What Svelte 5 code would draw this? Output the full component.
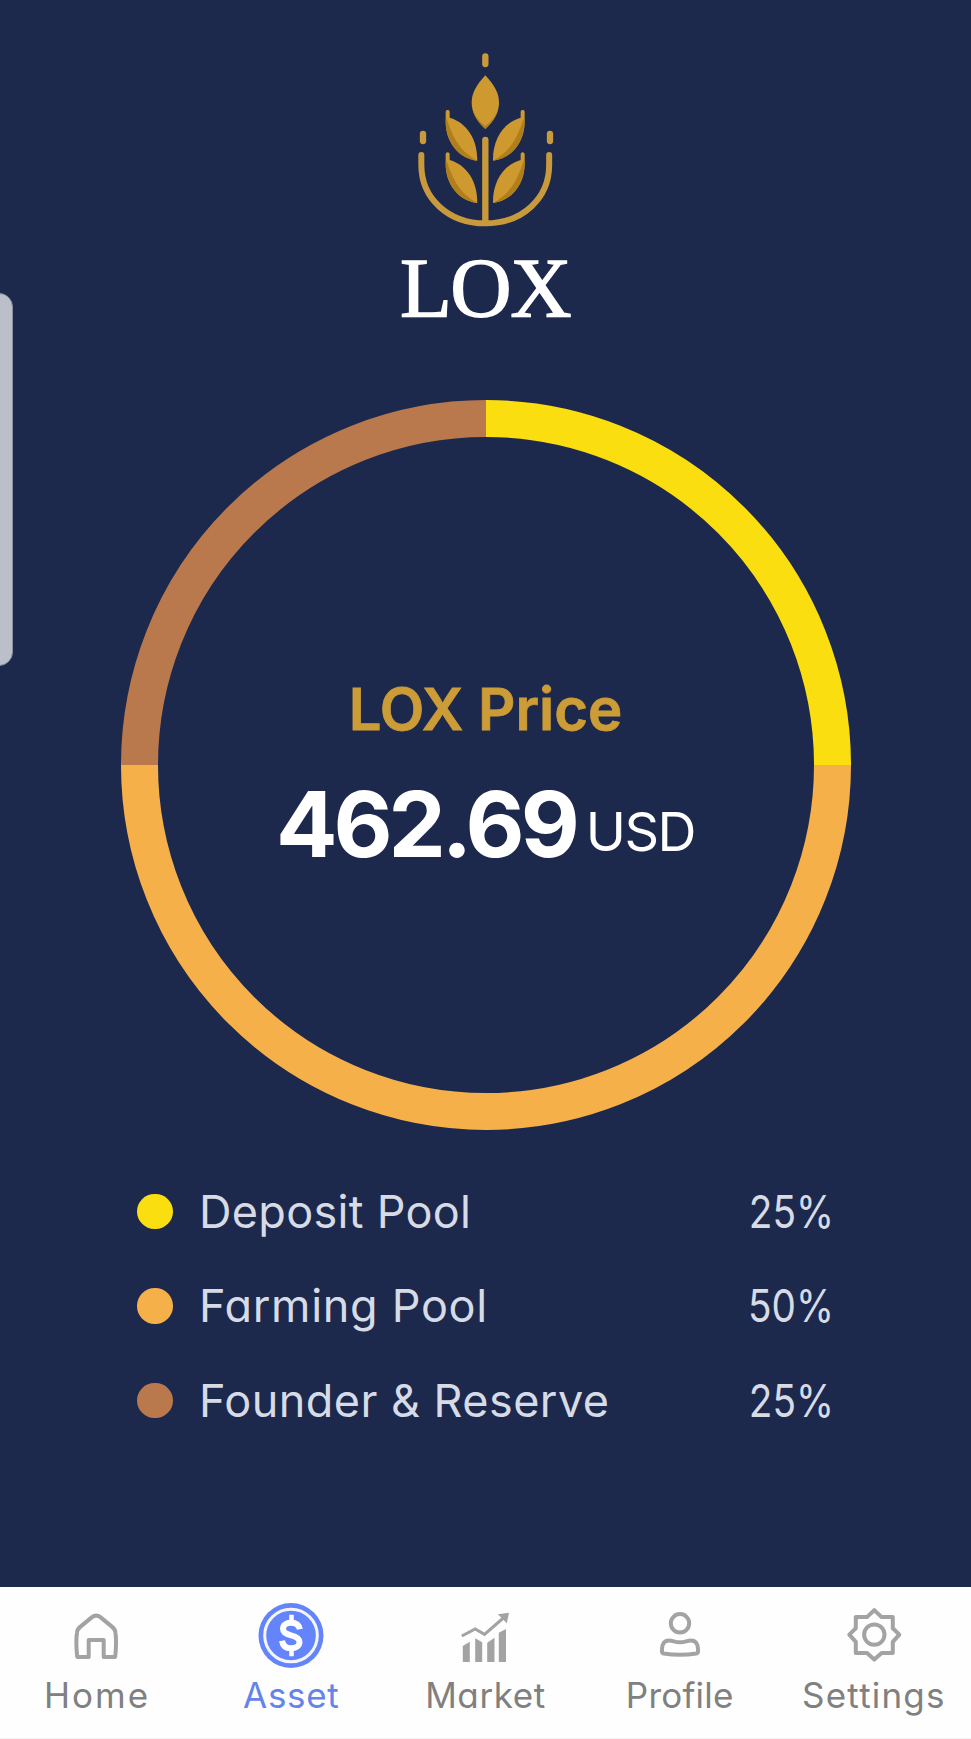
<script lang="ts">
	type Slice = {
		label: string;
		percent: number;
		color: string;
		tracking: number;
	};

	type Tab = {
		id: string;
		label: string;
		tracking: number;
	};

	const SLICES: Slice[] = [
		{ label: 'Deposit Pool', percent: 25, color: '#fbde0f', tracking: 0.3 },
		{ label: 'Farming Pool', percent: 50, color: '#f6b04a', tracking: 0.7 },
		{ label: 'Founder & Reserve', percent: 25, color: '#ba784d', tracking: 0.45 }
	];

	const TABS: Tab[] = [
		{ id: 'home', label: 'Home', tracking: 2 },
		{ id: 'asset', label: 'Asset', tracking: 0.7 },
		{ id: 'market', label: 'Market', tracking: 0.6 },
		{ id: 'profile', label: 'Profile', tracking: 0.2 },
		{ id: 'settings', label: 'Settings', tracking: 1.2 }
	];

	let activeTab = $state('asset');

	// where each slice starts on the ring, in percent
	const arcs = SLICES.map((s, i) => ({
		...s,
		start: SLICES.slice(0, i).reduce((sum, p) => sum + p.percent, 0)
	}));
</script>

<div class="screen">
	<div class="edge-handle"></div>

	<main>
		<div class="logo">
			<svg viewBox="90 30 450 540" width="150" height="180" fill="none">
				<g stroke="#c99a3c" stroke-width="19" stroke-linecap="round">
					<path d="M316 49V72M129 282V303M510 282V303M316 300V548" />
					<path stroke-width="18" d="M124 345V375C124 475 205 550 316 550C427 550 507.500 475 507.500 375V345" />
				</g>
				<path
					fill="#ce9a30"
					d="M316 106C288 137 275 160 275 188C275 217 290 242 316 267C342 242 357 217 357 188C357 160 344 137 316 106Z"
				/>
				<path fill="#b07f1b" d="M278 208C284 233 297 250 316 267C335 250 348 233 354 208C346 230 335 244 316 258C297 244 286 230 278 208Z" />
				{#each [0, 127] as dy (dy)}
					<g transform="translate(0 {dy})">
						{#each ['', 'translate(631 0) scale(-1 1)'] as flip (flip)}
							<g transform={flip}>
								<path
									fill="#ce9a30"
									d="M197 216C197 208 209 208 209 216V233C261 248 293 298 292 362C238 356 195 308 197 240Z"
								/>
								<path fill="#b07f1b" d="M197 236C195 308 238 356 292 362C250 338 225 312 200 236Z" />
							</g>
						{/each}
					</g>
				{/each}
			</svg>
			<h1>LOX</h1>
		</div>

		<div class="chart">
			<svg viewBox="0 0 730 730" width="730" height="730">
				{#each arcs as a (a.label)}
					<circle
						cx="365"
						cy="365"
						r="346.5"
						fill="none"
						stroke={a.color}
						stroke-width="37"
						pathLength="100"
						stroke-dasharray="{a.percent} {100 - a.percent}"
						stroke-dashoffset={-a.start}
						transform="rotate(-90 365 365)"
					/>
				{/each}
			</svg>
			<div class="price">
				<h2>LOX Price</h2>
				<p><strong>462.69</strong><span>USD</span></p>
			</div>
		</div>

		<ul class="legend">
			{#each SLICES as s (s.label)}
				<li>
					<i style:background={s.color}></i>
					<span style:letter-spacing="{s.tracking}px">{s.label}</span>
					<b>{s.percent}%</b>
				</li>
			{/each}
		</ul>
	</main>

	<nav>
		{#each TABS as t (t.id)}
			<button class:active={activeTab === t.id} onclick={() => (activeTab = t.id)}>
				<svg viewBox="0 0 66 66" width="66" height="66" fill="none" stroke="#a3a3a3" stroke-width="4" stroke-linejoin="round">
					{#if t.id === 'home'}
						<path
							transform="translate(-0.8 -1.6)"
							d="M14 56.500H25.500V39.500H40.500V56.500H52Q53.500 42 52.300 32.500Q52 29 49 26.500L37.500 17Q33 13.500 28.500 17L17 26.500Q14 29 13.700 32.500Q12.500 42 14 56.500Z"
						/>
					{:else if t.id === 'asset'}
						<circle cx="33" cy="33.500" r="32.500" fill="#6484fb" stroke="none" />
						<circle cx="33" cy="33.500" r="26.300" stroke="#f3f6ff" stroke-width="3" />
						<g stroke="#fff" transform="translate(0 -0.7)">
							<path
								stroke-width="6"
								d="M41.800 28C41 23.500 38 21.500 33 21.500C28 21.500 25 24 25 27.500C25 31.500 28 32.800 33 34C38.500 35.300 41.500 37 41.500 40.800C41.500 44.700 38 47 33 47C27.500 47 24.700 44.200 24 39.500"
							/>
							<path stroke-width="4.500" d="M33.500 13.500V22M33.500 46V55" />
						</g>
					{:else if t.id === 'market'}
						<path stroke-width="3" stroke-linejoin="miter" d="M9.800 34L23.200 26.900L32.500 32.300L52.500 15" />
						<g fill="#a3a3a3" stroke="none">
							<path d="M45.800 12.300L57 10.700L54.800 21.300Z" />
							<path d="M10.800 44L17.800 39.700V60H10.800Z" />
							<path d="M23.200 36.300L30.200 40.300V60H23.200Z" />
							<path d="M35.200 40.700L42.500 35.700V60H35.200Z" />
							<path d="M46.800 30.700L54 27V60H46.800Z" />
						</g>
					{:else if t.id === 'profile'}
						<circle cx="33" cy="21.300" r="9.200" />
						<path
							d="M22 38.500C26 38.500 28 40.300 33 40.300C38 40.300 40 38.500 44 38.500C49 38.500 51 42.500 51 47V49.500Q51 51 49.500 51.500Q33 54 16.500 51.500Q15 51 15 49.500V47C15 42.500 17 38.500 22 38.500Z"
						/>
					{:else}
						<g transform="translate(0.3 -1.4)">
							<path
								d="M33 9.500L40.300 16.500H51.500V27.700L58 34L51.500 41.300V52.500H40.300L33 59L25.700 52.500H14.500V41.300L8 34L14.500 27.700V16.500H25.700Z"
							/>
							<circle cx="33" cy="34" r="10.200" />
						</g>
					{/if}
				</svg>
				<span style:letter-spacing="{t.tracking}px">{t.label}</span>
			</button>
		{/each}
	</nav>
</div>

<style>
	:global(body) {
		background: #1c294d;
	}

	.screen {
		position: relative;
		display: flex;
		flex-direction: column;
		height: 1739px;
		overflow: hidden;
		background: #1c294d;
		font-family: Inter, 'Open Sans', sans-serif;
		font-feature-settings: 'cv11';
	}

	/* system panel handle that floats over the left edge */
	.edge-handle {
		position: absolute;
		left: -20px;
		top: 293px;
		width: 33px;
		height: 373px;
		box-sizing: border-box;
		border: 1px solid #8a90a0;
		border-radius: 14px;
		background: #bbbfca;
	}

	main {
		flex: 1;
		display: flex;
		flex-direction: column;
		align-items: center;
		padding-top: 50px;
	}

	.logo {
		display: flex;
		flex-direction: column;
		align-items: center;
		height: 350px;
		padding-right: 1px;
	}

	.logo svg {
		display: block;
	}

	h1 {
		margin: 10px 0 0;
		font-family: 'Liberation Serif', serif;
		font-size: 85px;
		font-weight: 400;
		line-height: 96px;
		letter-spacing: -1.5px;
		color: #fff;
		-webkit-text-stroke: 1.4px #fff;
	}

	.chart {
		display: grid;
		place-items: center;
	}

	.chart > * {
		grid-area: 1 / 1;
	}

	.chart svg {
		display: block;
	}

	.price {
		padding-top: 31px;
		text-align: center;
	}

	h2 {
		margin: 0;
		font-size: 58px;
		font-weight: 600;
		line-height: 80px;
		color: #cc9c37;
		-webkit-text-stroke: 0.8px #cc9c37;
	}

	.price p {
		display: flex;
		justify-content: center;
		align-items: flex-end;
		gap: 10px;
		margin: 20px 0 14px;
		line-height: 110px;
		color: #fff;
	}

	strong {
		font-size: 91px;
		font-weight: 700;
		letter-spacing: -4px;
	}

	.price span {
		margin-bottom: 17px;
		font-size: 54px;
		line-height: 60px;
		letter-spacing: -1.5px;
	}

	.legend {
		width: 697px;
		margin: 34px 0 0;
		padding: 0;
		list-style: none;
	}

	.legend li {
		display: flex;
		align-items: center;
		height: 94.5px;
		font-size: 45px;
		color: #d7dbe5;
	}

	.legend i {
		width: 35.5px;
		height: 35.5px;
		margin-right: 26.5px;
		border-radius: 50%;
	}

	.legend b {
		margin-left: auto;
		font-weight: 400;
		transform: scaleX(0.86);
		transform-origin: right;
	}

	nav {
		display: grid;
		grid-template-columns: repeat(5, 1fr);
		height: 152px;
		box-sizing: border-box;
		border-bottom: 1px solid #f3f3f3;
		background: #fefefe;
	}

	button {
		display: flex;
		flex-direction: column;
		align-items: center;
		min-width: 0;
		padding: 15px 0 0;
		border: none;
		background: none;
		font: inherit;
		font-feature-settings: 'cv11';
		font-size: 35px;
		line-height: 44px;
		color: #808080;
		cursor: pointer;
	}

	button svg {
		display: block;
		margin-bottom: 5px;
		overflow: visible;
	}

	button.active {
		color: #6484ea;
	}
</style>
